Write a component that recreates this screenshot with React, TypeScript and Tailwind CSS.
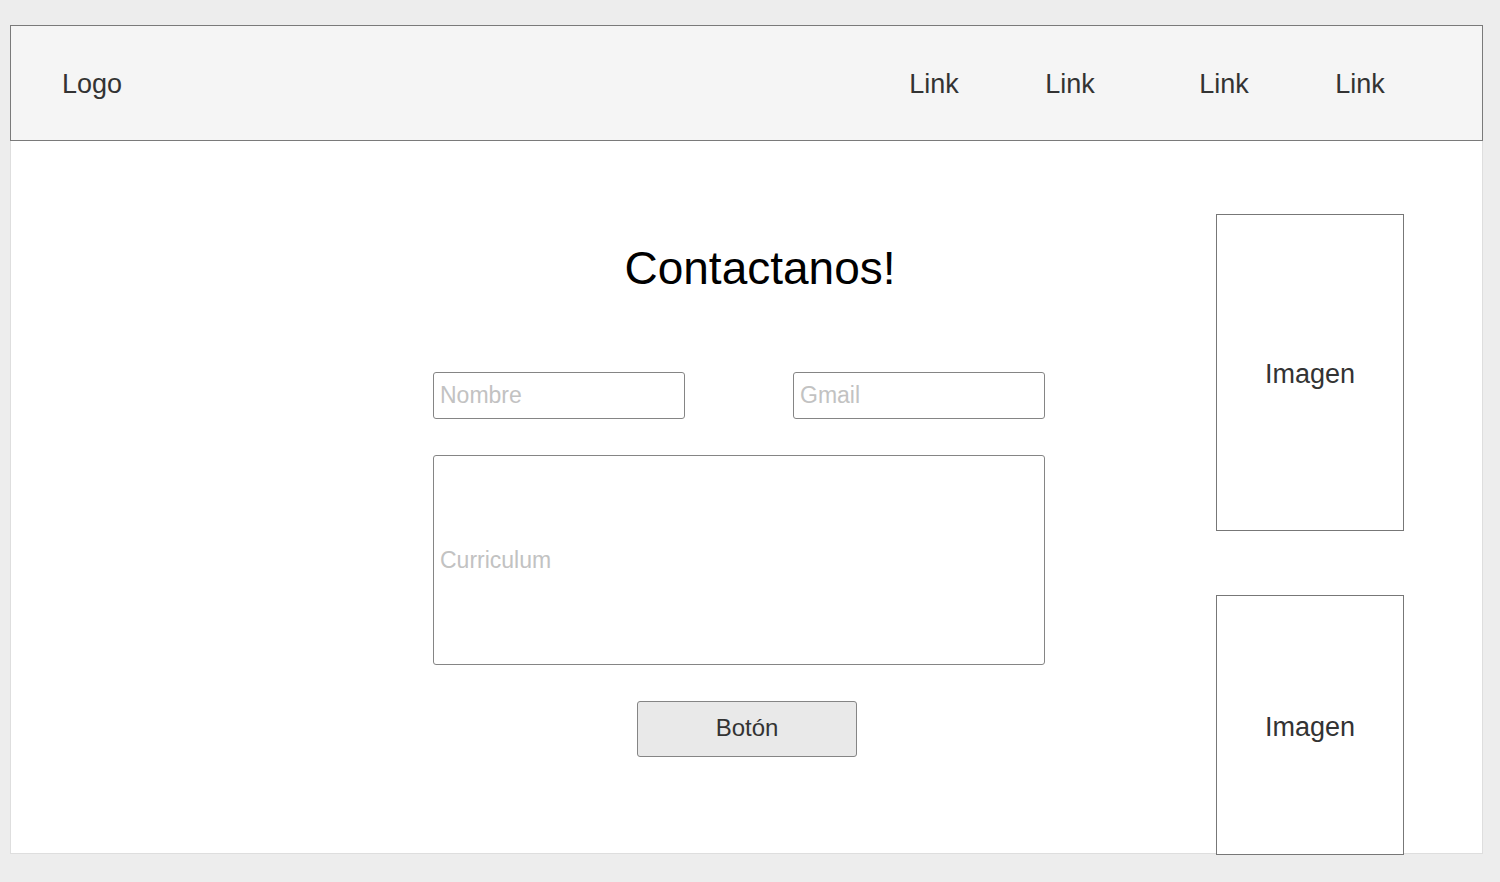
export default function App() {
	const font = { fontFamily: '"Liberation Sans", Arial, sans-serif' };

	return (
		<div
			className="h-[882px] w-[1500px] overflow-hidden bg-[#ededed] pt-[25px] pl-[10px]"
			style={font}
		>
			<div className="w-[1473px]">
				{/* header */}
				<header className="flex h-[116px] items-center border border-[#7a7a7a] bg-[#f5f5f5] pt-[3px] pl-[51px] pr-[72px] text-[27px] text-[#333]">
					<span>Logo</span>
					<nav className="ml-auto flex">
						<a className="w-[100px] text-center">Link</a>
						<a className="ml-[36px] w-[100px] text-center">Link</a>
						<a className="ml-[54px] w-[100px] text-center">Link</a>
						<a className="ml-[36px] w-[100px] text-center">Link</a>
					</nav>
				</header>

				{/* body */}
				<main className="flex h-[713px] border-x border-b border-[#dedede] bg-white pl-[422px]">
					<form className="flex w-[612px] flex-col">
						<h1 className="mt-[104px] pl-[42px] text-center text-[46px] leading-none text-black">
							Contactanos!
						</h1>

						<div className="mt-[81px] flex justify-between">
							<input
								placeholder="Nombre"
								className="h-[47px] w-[252px] rounded-[3px] border border-[#858585] bg-white px-[6px] text-[23px] text-[#333] outline-none placeholder:text-[#c2c2c2]"
							/>
							<input
								placeholder="Gmail"
								className="h-[47px] w-[252px] rounded-[3px] border border-[#858585] bg-white px-[6px] text-[23px] text-[#333] outline-none placeholder:text-[#c2c2c2]"
							/>
						</div>

						<div className="mt-[36px] flex h-[210px] items-center rounded-[3px] border border-[#858585] px-[6px] text-[23px] text-[#c2c2c2]">
							Curriculum
						</div>

						<button
							type="button"
							className="mt-[36px] ml-[204px] h-[56px] w-[220px] rounded-[3px] border border-[#858585] bg-[#e9e9e9] pb-[2px] text-[24px] text-[#333]"
						>
							Botón
						</button>
					</form>

					<aside className="ml-[171px] flex w-[188px] flex-col pt-[73px] text-[27px] text-[#333]">
						<div className="flex h-[317px] shrink-0 items-center justify-center border border-[#777] pt-[4px]">
							Imagen
						</div>
						<div className="mt-[64px] flex h-[260px] shrink-0 items-center justify-center border border-[#777] bg-white pt-[4px]">
							Imagen
						</div>
					</aside>
				</main>
			</div>
		</div>
	);
}
